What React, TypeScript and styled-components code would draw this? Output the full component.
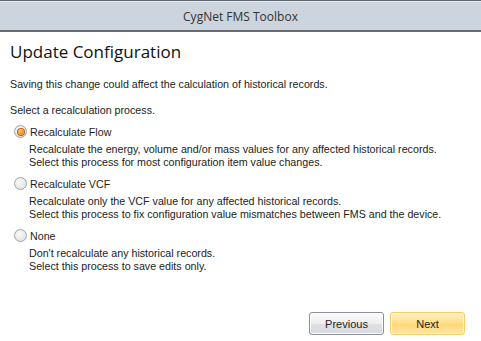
import styled, { createGlobalStyle } from "styled-components"

const Global = createGlobalStyle`
  html, body { margin: 0; padding: 0; background: #fff; }
  body { width: 481px; height: 341px; overflow: hidden; }
`

const options = [
  {
    label: "Recalculate Flow",
    lines: [
      "Recalculate the energy, volume and/or mass values for any affected historical records.",
      "Select this process for most configuration item value changes.",
    ],
    checked: true,
  },
  {
    label: "Recalculate VCF",
    lines: [
      "Recalculate only the VCF value for any affected historical records.",
      "Select this process to fix configuration value mismatches between FMS and the device.",
    ],
    checked: false,
  },
  {
    label: "None",
    lines: ["Don't recalculate any historical records.", "Select this process to save edits only."],
    checked: false,
  },
]

export default function App() {
  return (
    <Window>
      <Global />
      <TitleBar>CygNet FMS Toolbox</TitleBar>
      <Body>
        <Heading>Update Configuration</Heading>
        <Text>Saving this change could affect the calculation of historical records.</Text>
        <Prompt>Select a recalculation process.</Prompt>
        <Options>
          {options.map((o) => (
            <Option key={o.label}>
              <RadioRow>
                <Radio $checked={o.checked} />
                <Label>{o.label}</Label>
              </RadioRow>
              <Desc>
                {o.lines.map((l) => (
                  <div key={l}>{l}</div>
                ))}
              </Desc>
            </Option>
          ))}
        </Options>
      </Body>
      <Footer>
        <Button>Previous</Button>
        <Button $primary>Next</Button>
      </Footer>
    </Window>
  )
}

const Window = styled.div`
  width: 481px;
  height: 341px;
  display: flex;
  flex-direction: column;
  font-family: "Liberation Sans", Arial, sans-serif;
  color: #1e1e1e;
`
const TitleBar = styled.div`
  height: 28px;
  flex: none;
  display: flex;
  align-items: center;
  justify-content: center;
  background: #ccd5dd;
  border-top: 1px solid #5e6670;
  box-shadow: inset 0 1px 0 #e8edf1;
  border-bottom: 2px solid #6a6c72;
  font-family: "Open Sans", sans-serif;
  font-size: 12px;
  color: #333;
  padding-top: 1px;
`
const Body = styled.div`
  flex: 1;
  padding: 8px 10px 0 10px;
  font-size: 10.7px;
`
const Heading = styled.h1`
  margin: 0;
  font-family: "Open Sans", sans-serif;
  font-weight: 400;
  font-size: 17px;
  line-height: 24px;
  color: #111;
`
const Text = styled.div`
  margin-top: 14px;
  line-height: 13px;
  color: #222;
`
const Prompt = styled(Text)`
  margin-top: 13px;
`
const Options = styled.div`
  margin-top: 6px;
  display: flex;
  flex-direction: column;
  gap: 6px;
`
const Option = styled.div`
  display: flex;
  flex-direction: column;
`
const RadioRow = styled.div`
  display: flex;
  align-items: center;
  height: 17px;
  padding-left: 4px;
`
const Radio = styled.span<{ $checked?: boolean }>`
  width: 11px;
  height: 11px;
  border-radius: 50%;
  border: 1px solid #a3a3a3;
  background: radial-gradient(circle at 40% 35%, #fafafa, #dcdcdc);
  position: relative;
  margin-right: 3px;
  &::after {
    content: "";
    display: ${(p) => (p.$checked ? "block" : "none")};
    position: absolute;
    left: 2.5px;
    top: 2.5px;
    width: 6px;
    height: 6px;
    border-radius: 50%;
    background: radial-gradient(circle at 40% 35%, #ffc46a, #e06f00);
    box-shadow: 0 0 0 1px #c25f06;
  }
`
const Label = styled.span`
  color: #1e1e1e;
`
const Desc = styled.div`
  padding-left: 19px;
  margin-top: 3px;
  line-height: 13px;
  color: #222;
`
const Footer = styled.div`
  flex: none;
  display: flex;
  justify-content: flex-end;
  gap: 6px;
  padding: 0 16px 6px 0;
`
const Button = styled.button<{ $primary?: boolean }>`
  width: 75px;
  height: 23px;
  border-radius: 3px;
  font-family: "Liberation Sans", Arial, sans-serif;
  font-size: 11px;
  color: #1e1e1e;
  padding: 0;
  border: 1px solid ${(p) => (p.$primary ? "#f2cf6b" : "#8a8e96")};
  background: ${(p) =>
    p.$primary
      ? "linear-gradient(#fff1c4, #fedd87 50%, #ffd778 51%, #ffe6a5)"
      : "linear-gradient(#fbfbfb, #eeeef0 50%, #e0e1e5 51%, #d8d9de)"};
  box-shadow: inset 0 0 0 1px ${(p) => (p.$primary ? "#fff4cf" : "#fdfdfd")};
`
